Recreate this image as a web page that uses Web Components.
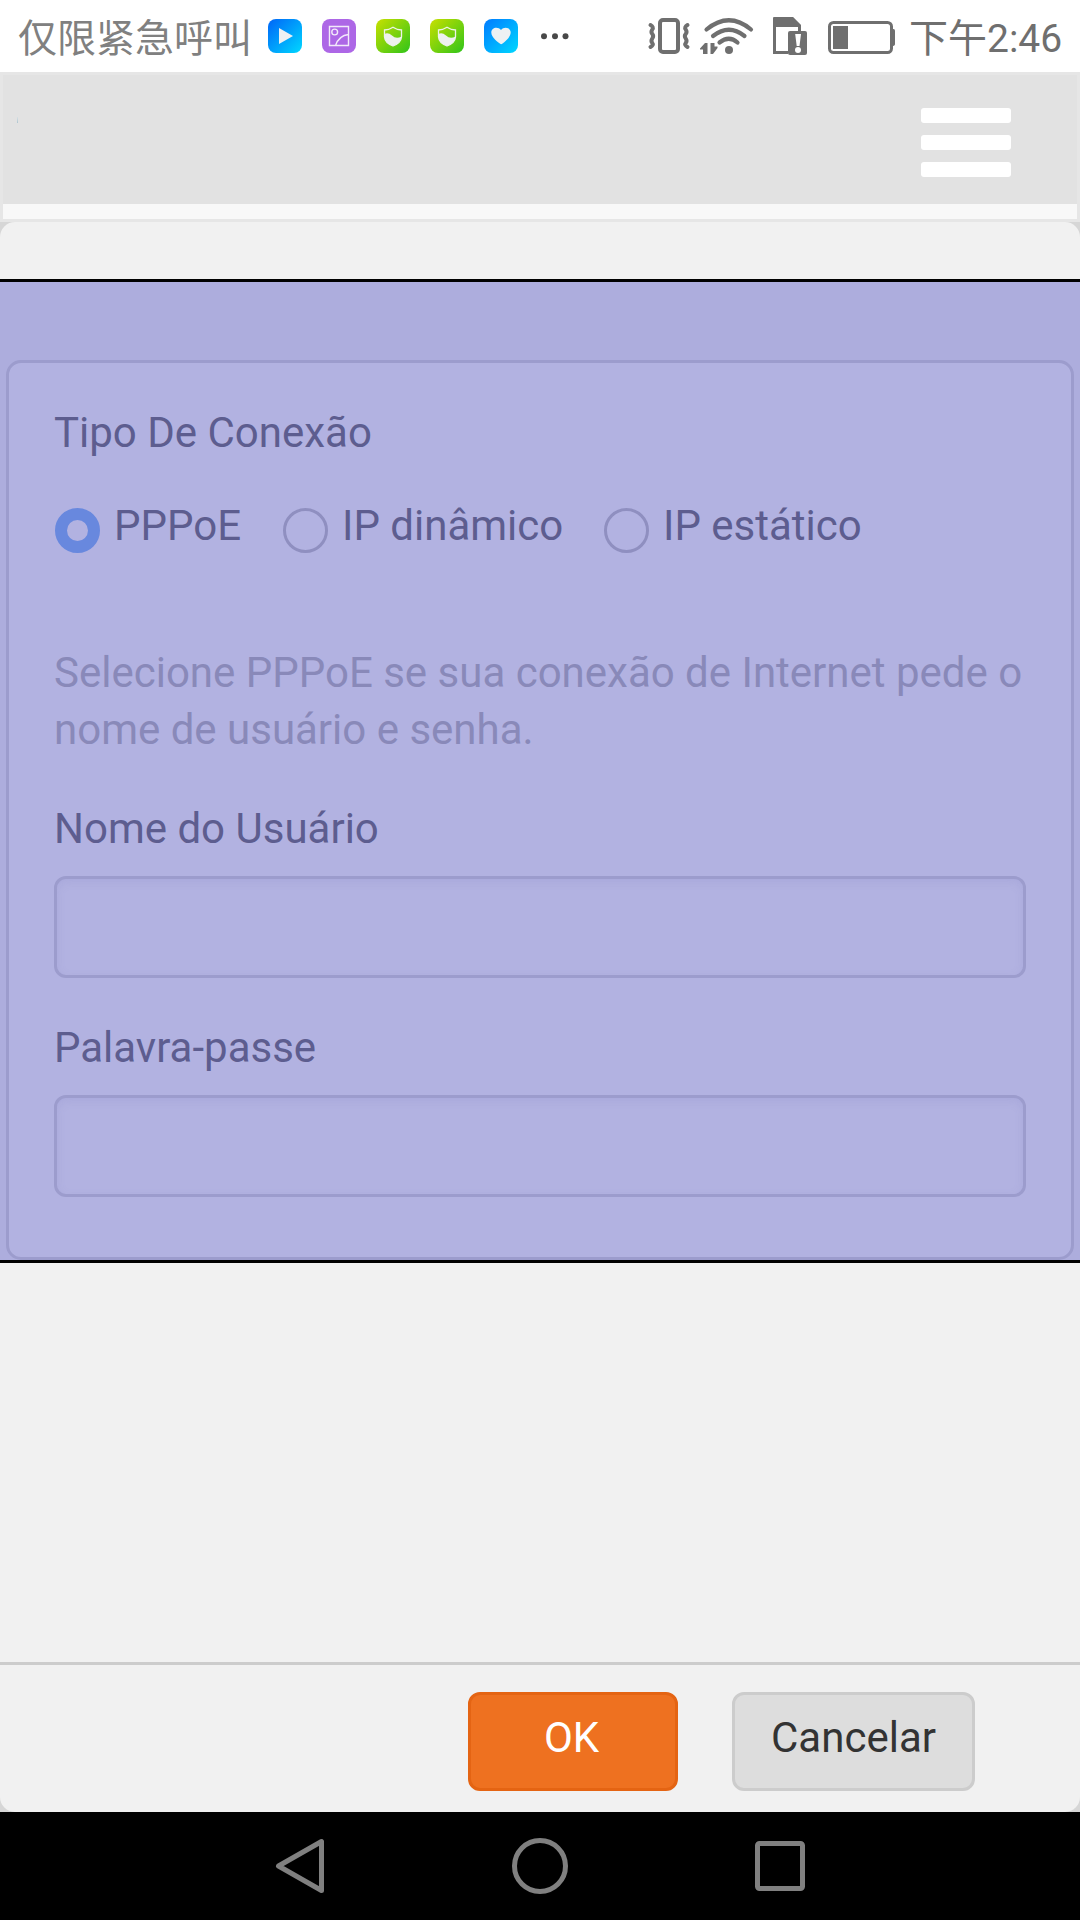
<!DOCTYPE html>
<html lang="pt">
<head>
<meta charset="utf-8">
<title>Tipo De Conexão</title>
<style>
html,body{margin:0;padding:0}
body{width:1080px;height:1920px;overflow:hidden;background:#d6d6d6;font-family:Roboto,"Noto Sans CJK SC",sans-serif}
</style>
</head>
<body>
<router-screen></router-screen>
<script>
const define = (name, css, html) => customElements.define(name, class extends HTMLElement {
  constructor() {
    super();
    this.attachShadow({mode: 'open'}).innerHTML = `<style>*{box-sizing:border-box}${css}</style>${html}`;
  }
});

define('app-badge', `
:host{display:block;width:34px;height:34px;border-radius:8px;background:var(--fill)}
::slotted(svg){display:block}`, `<slot></slot>`);

const shield = `<svg width="34" height="34" viewBox="0 0 34 34"><path d="M8.5 11Q13 11 17 8.3Q21 11 25.5 11V18Q25 24 17 27Q9 24 8.5 18Z" fill="none" stroke="#edf3e8" stroke-width="1.3"/><path d="M8.5 15Q12 13 16 16.500Q20 20.500 25.500 17.500Q25 24 17 27Q9 24 8.500 18Z" fill="#edf1ee"/></svg>`;

define('status-bar', `
:host{display:flex;height:72px;background:#fff;color:#6f6f6f;font-size:39px;line-height:58px;padding:0 18px;align-items:flex-start;justify-content:space-between}
.left,.right,.apps{display:flex}
.carrier{color:#808080;width:250px;white-space:nowrap;height:72px;padding-top:10px}
.apps{gap:20px;padding-top:19px}
.dots{display:block;margin:14px 0 0 2px}
.right{width:416px}
.time{white-space:nowrap;margin-left:13px;padding-top:9px;line-height:60px}
svg{display:block;flex:none}`, `
<div class="left"><div class="carrier">仅限紧急呼叫</div>
<div class="apps">
<app-badge style="--fill:linear-gradient(135deg,#0065f8,#00d8ff)"><svg width="34" height="34"><path d="M11 9V25L25 17Z" fill="#edf1f3"/></svg></app-badge>
<app-badge style="--fill:#ad67e6"><svg width="34" height="34" fill="none" stroke="#f2e9fa" stroke-width="1.4"><path d="M7.500 7.500H26.500V26.500H7.500ZM13.500 26.500Q17 16.500 26.500 15.500"/><circle cx="12.700" cy="13" r="2.900"/></svg></app-badge>
<app-badge style="--fill:linear-gradient(135deg,#c8e000,#2fc41a)">${shield}</app-badge>
<app-badge style="--fill:linear-gradient(135deg,#c8e000,#2fc41a)">${shield}</app-badge>
<app-badge style="--fill:linear-gradient(135deg,#007bff,#00d8ff)"><svg width="34" height="34"><path d="M17 25.300C14.500 24 7.300 18.500 7.300 13.500C7.300 8.300 14 7 17 11C20 7 26.700 8.300 26.700 13.500C26.700 18.500 19.500 24 17 25.300Z" fill="#edf1f3"/></svg></app-badge>
<svg class="dots" width="30" height="8" fill="#484848"><circle cx="4" cy="3.200" r="3"/><circle cx="15" cy="3.200" r="3"/><circle cx="25.500" cy="3.200" r="3"/></svg>
</div></div>
<div class="right">
<svg width="250" height="72" viewBox="646 0 250 72" fill="none" stroke="#6f6f6f">
<rect x="660" y="20" width="18" height="32" rx="3" stroke-width="4"/>
<path d="M650.500 25Q654 27 652.300 29.500T652.300 34T652.300 38.500T652.300 43T650.500 47M687.500 25Q684 27 685.700 29.500T685.700 34T685.700 38.500T685.700 43T687.500 47" stroke-width="4" stroke-linecap="round"/>
<g stroke-width="4.200" stroke-linecap="round"><path d="M706.500 29.500Q729 11 751 29.500M713 36Q729 23.500 744.500 36M719.500 42.500Q729 35 737.500 42.500"/></g>
<circle cx="729" cy="50" r="4" fill="#6f6f6f" stroke="none"/>
<path d="M707.500 43V54H703V49.500H700V48.500L705 43ZM710.500 43H714.500V46.500H717.500V48L713 54H710.500Z" fill="#6f6f6f" stroke="none"/>
<path d="M775 18.500H792L799.500 26V31M788 52.500H774.500V20" stroke-width="3"/>
<path d="M773 18Q773 17 774 17H793L801 25V31H798V27H773Z" fill="#6f6f6f" stroke="none"/>
<rect x="788" y="31" width="19" height="24" rx="2" fill="#6f6f6f" stroke="none"/>
<path d="M795.200 34H801L799.500 46H796.700Z" fill="#fff" stroke="none"/><circle cx="798" cy="50" r="3" fill="#fff" stroke="none"/>
<rect x="829.500" y="22.500" width="62" height="30" rx="4" stroke-width="3"/>
<rect x="833" y="26" width="15" height="23" fill="#6f6f6f" stroke="none"/>
<path d="M892 29H893.500Q895 29 895 30.500V44Q895 46 892 46Z" fill="#6f6f6f" stroke="none"/>
</svg>
<div class="time">下午2:46</div></div>`);

define('menu-button', `
:host{display:flex;flex-direction:column;gap:12px;width:90px}
i{height:15px;border-radius:3px;background:#fff}`, `<i></i><i></i><i></i>`);

define('page-header', `
:host{display:flex;justify-content:space-between;align-items:flex-start;height:150px;border:3px solid #e6e6e6;background:linear-gradient(#e2e2e2 129px,#f8f8f8 129px);padding:33px 66px 0 14px;box-sizing:border-box}
span{width:1px;height:6px;margin-top:9px;background:linear-gradient(#d8e0e4,#adc5d0)}`, `<span></span><menu-button></menu-button>`);

define('radio-option', `
:host{display:flex;align-items:flex-start;gap:13.6px;color:#5d5d8f;font-size:42px;line-height:57px;white-space:nowrap}
i{flex:none;width:45px;height:45px;border-radius:50%;border:3px solid #8f8fc0;margin-top:11.4px}
:host([checked]) i{border:12px solid #6888de}`, `<i></i><slot></slot>`);

define('text-field', `
:host{display:block;color:#5d5d8f;font-size:42px;line-height:57px}
label{display:block;margin-bottom:19px}
input{display:block;width:100%;height:102px;border:3px solid #9c9ccd;border-radius:12px;background:#b2b2e1;box-shadow:inset 0 3px 9px rgba(125,125,190,.16);outline:0;padding:0 20px;font:inherit;color:inherit}`, `<label><slot></slot></label><input>`);

define('connection-form', `
:host{display:block;height:984px;border-top:3px solid #000;border-bottom:3px solid #000;background:#adaddd;padding:78px 6px 0;box-sizing:border-box}
section{height:900px;border:3px solid #9c9ccd;border-radius:15px;background:#b2b2e1;padding:41px 45px 0;font-size:42px;line-height:57px;color:#5d5d8f}
.radios{display:grid;grid-template-columns:228px 321px auto;height:57px;margin:36px 0 90px 1.4px}
p{margin:0 -10px 42px 0;color:#8989b9}
text-field+text-field{margin-top:41px}`, `
<section><div>Tipo De Conexão</div>
<div class="radios"><radio-option checked>PPPoE</radio-option><radio-option>IP dinâmico</radio-option><radio-option>IP estático</radio-option></div>
<p>Selecione PPPoE se sua conexão de Internet pede o<br>nome de usuário e senha.</p>
<text-field>Nome do Usuário</text-field><text-field>Palavra-passe</text-field></section>`);

define('action-button', `
:host{display:block}
button{display:block;width:var(--w);height:99px;padding:0 0 9px;border:3px solid #ccc;border-radius:12px;background:#ddd;color:#333;font:42px/57px Roboto,sans-serif}
:host([primary]) button{background:#ee7120;border-color:#e46413;color:#fff;padding-right:3px}`, `<button><slot></slot></button>`);

define('dialog-sheet', `
:host{display:flex;flex-direction:column;height:1590px;border-radius:15px;background:#f1f1f1;padding-top:57px;box-sizing:border-box;overflow:hidden}
footer{margin-top:auto;height:150px;border-top:3px solid #ccc;display:flex;justify-content:flex-end;gap:54px;padding:27px 105px 0 0}`, `
<slot></slot><footer><action-button primary style="--w:210px">OK</action-button><action-button style="--w:243px">Cancelar</action-button></footer>`);

define('nav-bar', `
:host{display:flex;height:108px;background:#000;align-items:center;justify-content:center;gap:180px}
svg{display:block}`, `
<svg width="60" height="60" fill="none" stroke="#808080" stroke-width="5" stroke-linejoin="round"><path d="M8.500 30L51.500 5.500V54.500Z"/></svg>
<svg width="60" height="60" fill="none" stroke="#808080" stroke-width="5"><circle cx="30" cy="30" r="25.500"/></svg>
<svg width="60" height="60" fill="none" stroke="#808080" stroke-width="5"><rect x="7.500" y="7.500" width="45" height="45" rx="2"/></svg>`);

define('router-screen', `:host{display:flex;flex-direction:column;width:1080px;height:1920px}`, `
<status-bar></status-bar><page-header></page-header>
<dialog-sheet><connection-form></connection-form></dialog-sheet><nav-bar></nav-bar>`);
</script>
</body>
</html>
